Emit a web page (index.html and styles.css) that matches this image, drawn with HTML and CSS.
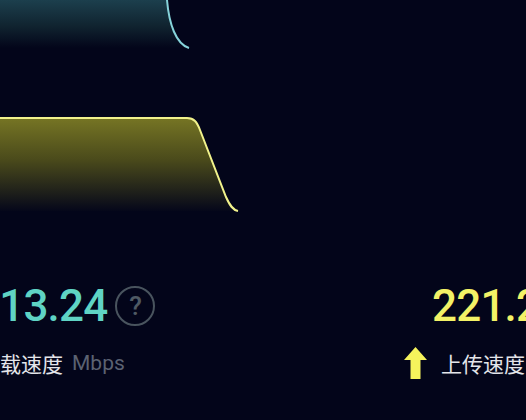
FILE: index.html
```html
<!DOCTYPE html>
<html lang="zh-CN">
<head>
  <meta charset="UTF-8">
  <meta name="viewport" content="width=device-width, initial-scale=1.0">
  <title>speed test</title>
<link rel="stylesheet" href="styles.css">
</head>
<body>
  <div class="screen">

    <!-- speed graph -->
    <svg class="graph" width="526" height="240" viewBox="0 0 526 240">
      <defs>
        <linearGradient id="dlFill" x1="0" y1="0" x2="0" y2="1">
          <stop offset="0" stop-color="#1c3f4d"/>
          <stop offset="0.55" stop-color="#10232f"/>
          <stop offset="1" stop-color="#03051a"/>
        </linearGradient>
        <linearGradient id="ulFill" x1="0" y1="0" x2="0" y2="1">
          <stop offset="0" stop-color="#767524"/>
          <stop offset="0.45" stop-color="#4a4a1b"/>
          <stop offset="1" stop-color="#05071a"/>
        </linearGradient>
      </defs>
      <path d="M0,0 H167 C169,24 176,44 189,48 L0,48 Z" fill="url(#dlFill)"/>
      <path d="M167,0 C169,24 176,44 189,48" fill="none" stroke="#86d3da" stroke-width="2"/>
      <path d="M0,118 H187 C194,118 197,122 200,130 L226,197 C230,206 233,210 238,211 L0,211 Z" fill="url(#ulFill)"/>
      <path d="M0,118 H187 C194,118 197,122 200,130 L226,197 C230,206 233,210 238,211" fill="none" stroke="#f1f28c" stroke-width="2"/>
    </svg>

    <div class="stats">
      <div class="stat down">
        <div class="value">
          <span class="num">113.24</span>
          <span class="help">?</span>
        </div>
        <div class="label">
          <svg class="arrow" width="23" height="32" viewBox="0 0 23 32">
            <path d="M6.5,0 H16.5 V19 H23 L11.5,32 L0,19 H6.5 Z" fill="#5fd4c4"/>
          </svg>
          <span class="name">下载速度</span>
          <span class="unit">Mbps</span>
        </div>
      </div>

      <div class="stat up">
        <div class="value">
          <span class="num">221.24</span>
        </div>
        <div class="label">
          <svg class="arrow" width="23" height="32" viewBox="0 0 23 32">
            <path d="M11.5,0 L23,13 H16.5 V32 H6.5 V13 H0 Z" fill="#f5f35c"/>
          </svg>
          <span class="name">上传速度</span>
          <span class="unit">Mbps</span>
        </div>
      </div>
    </div>

  </div>
</body>
</html>
```

FILE: styles.css
```css
html, body {
  margin: 0;
  padding: 0;
  background-color: #03051a;
}

body {
  width: 526px;
  height: 420px;
  overflow: hidden;
  font-family: Roboto, "Noto Sans CJK SC", sans-serif;
}

.screen {
  display: flex;
  flex-direction: column;
}

.graph {
  display: block;
}

.stats {
  display: grid;
  grid-template-columns: 462px 300px;
  margin-top: 44px;
  margin-left: -58px;
}

.stat {
  display: flex;
  flex-direction: column;
  white-space: nowrap;
}

.value {
  display: flex;
  align-items: center;
  margin-left: 28px;
  height: 44px;
}

.down .value {
  margin-left: 33px;
}

.num {
  font-size: 44px;
  line-height: 44px;
  font-weight: 500;
  letter-spacing: -0.8px;
}

.down .num {
  color: #5fd4c4;
}

.up .num {
  color: #f3f266;
}

.help {
  box-sizing: border-box;
  width: 40px;
  height: 40px;
  margin-left: 8px;
  border: 2px solid #49545e;
  border-radius: 50%;
  color: #4f5a64;
  font-size: 26px;
  font-weight: 500;
  line-height: 36px;
  text-align: center;
}

.label {
  display: flex;
  align-items: center;
  margin-top: 19px;
  height: 32px;
}

.arrow {
  display: block;
  flex: none;
}

.name {
  margin-left: 14px;
  font-family: "Noto Sans CJK SC", sans-serif;
  font-size: 21px;
  line-height: 32px;
  color: #e4e5ea;
}

.unit {
  margin-left: 9px;
  font-size: 21px;
  line-height: 32px;
  color: #5b6272;
}
```
